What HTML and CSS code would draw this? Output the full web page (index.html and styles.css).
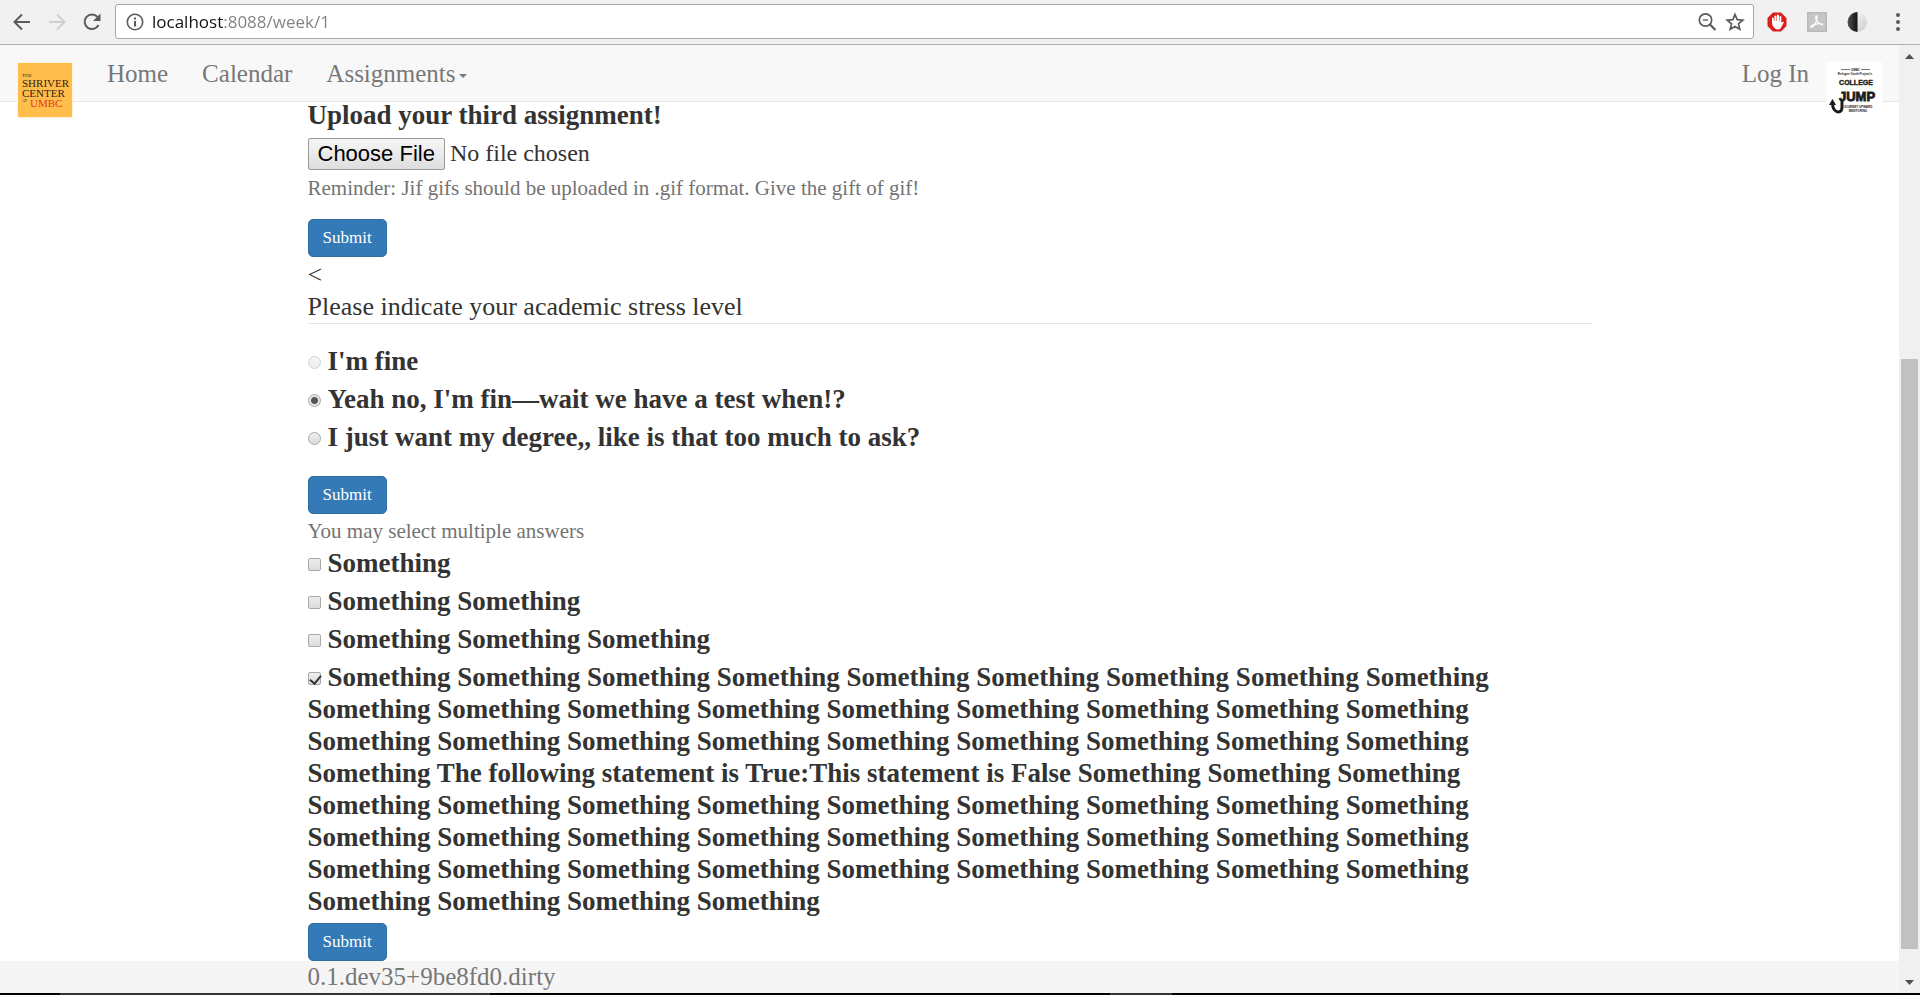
FILE: index.html
```html
<!DOCTYPE html>
<html lang="en">
<head>
<meta charset="utf-8">
<title>Week 1</title>
<link rel="stylesheet" href="styles.css">
</head>
<body>
<header class="toolbar">
  <button class="tool" aria-label="Back"><svg width="24" height="24" viewBox="0 0 24 24" fill="none" stroke="#5a5a5a" stroke-width="2"><path d="M20 12H5M12 4.500L4.500 12L12 19.500"/></svg></button>
  <button class="tool" aria-label="Forward" disabled><svg width="24" height="24" viewBox="0 0 24 24" fill="none" stroke="#d0d0d0" stroke-width="2"><path d="M4 12H19M12 4.500L19.500 12L12 19.500"/></svg></button>
  <button class="tool" aria-label="Reload"><svg width="24" height="24" viewBox="0 0 24 24" fill="none" stroke="#5a5a5a" stroke-width="2"><path d="M18.500 15A7.300 7.300 0 1 1 17.500 7"/><path d="M20.500 3.500V11H13Z" fill="#5a5a5a" stroke="none"/></svg></button>
  <div class="address">
    <svg width="18" height="18" viewBox="0 0 18 18" fill="none" stroke="#5a5a5a" stroke-width="2"><circle cx="9" cy="9" r="7.700" stroke-width="1.600"/><path d="M9 8V13.500M9 4.500V6.500"/></svg>
    <input class="url" type="text" value="localhost:8088/week/1" aria-label="Address">
    <button class="tool" aria-label="Zoom"><svg width="20" height="20" viewBox="0 0 20 20" fill="none" stroke="#5a5a5a" stroke-width="1.700"><circle cx="8.500" cy="8" r="6.200"/><path d="M13 12.500L18.500 18" stroke-width="2.200"/><path d="M5.800 8H11.200" stroke-width="1.300"/></svg></button>
    <button class="tool" aria-label="Bookmark"><svg width="20" height="20" viewBox="0 0 20 20" fill="none" stroke="#5a5a5a" stroke-width="1.700"><path d="M10 2.500L12.200 7.700L17.800 8.200L13.500 11.900L14.800 17.300L10 14.400L5.200 17.300L6.500 11.900L2.200 8.200L7.800 7.700Z"/></svg></button>
  </div>
  <div class="extensions">
    <button class="tool" aria-label="Ad blocker"><svg width="20" height="20" viewBox="0 0 20 20"><path d="M6 .5H14L19.500 6V14L14 19.500H6L.5 14V6Z" fill="#dc1d1d"/><path d="M5 11V6Q5.800 5 6.800 6V9H7.400V4Q8.400 2.800 9.400 4V9H9.900V3Q11 1.800 12 3V9.500H12.500V4.500Q13.500 3.500 14.300 4.500V11Q16 9 17 10Q15 14 13.500 16.500Q11 18.500 8 16.500Q5 14 5 11Z" fill="#fff"/></svg></button>
    <button class="tool" aria-label="PDF"><svg width="20" height="20" viewBox="0 0 20 20"><path d="M0 0H20V20H0Z" fill="#b9b9b9"/><path d="M1.500 1.500H18.500V18.500H1.500Z" fill="#c6c6c6"/><path d="M9 4C11 3 10 8 9 10C7.500 13 5 16 4 15C3.500 13 11 11 15.500 12C17 13 12 13 9.500 8.500C8.500 6.500 8.500 5 9 4Z" fill="none" stroke="#fff" stroke-width="1.200"/></svg></button>
    <button class="tool" aria-label="Contrast"><svg width="20" height="20" viewBox="0 0 20 20"><defs><linearGradient id="lit" x1="0" y1="0" x2="1" y2="1"><stop offset="0" stop-color="#fff"/><stop offset="1" stop-color="#ccc"/></linearGradient><linearGradient id="dark" x1="0" y1="0" x2="1" y2="0"><stop offset="0" stop-color="#555"/><stop offset="1" stop-color="#111"/></linearGradient></defs><circle cx="10" cy="10" r="10" fill="url(#lit)"/><path d="M10.500 0A10 10 0 0 0 10.500 20Z" fill="url(#dark)"/></svg></button>
    <button class="tool menu" aria-label="Menu"><svg width="6" height="20" viewBox="0 0 6 20" fill="#5a5a5a"><circle cx="3" cy="3" r="2"/><circle cx="3" cy="10" r="2"/><circle cx="3" cy="17" r="2"/></svg></button>
  </div>
</header>
<div class="window">
  <div class="page">
    <nav class="navbar">
      <a class="brand" href="#"><svg width="56" height="56" viewBox="0 0 56 56" role="img" aria-label="The Shriver Center at UMBC"><path d="M0 0H56V56H0Z" fill="#fff3dc"/><path d="M1 1H55V55H1Z" fill="#ffbe4c"/><g font-family="Liberation Serif, serif" fill="#35230c"><text x="5" y="15" font-size="5">THE</text><text x="5" y="25" font-size="11">SHRIVER</text><text x="5" y="35" font-size="11">CENTER</text><text x="5" y="40" font-size="4">AT</text><text x="13" y="45" font-size="11" fill="#e43820">UMBC</text></g></svg></a>
      <a class="link" href="#">Home</a>
      <a class="link" href="#">Calendar</a>
      <a class="link" href="#">Assignments<span class="caret"></span></a>
      <a class="link login" href="#">Log In</a>
      <a class="brand" href="#"><svg width="56" height="56" viewBox="0 0 56 56" role="img" aria-label="College Jump"><path d="M0 0H56V56H0Z" fill="#fff"/><path d="M15 7.500H24M35 7.500H44" stroke="#777"/><g font-family="Liberation Sans, sans-serif" font-weight="700" fill="#1c1c1c" text-anchor="middle"><text x="29.500" y="9" font-size="3">UMBC</text><text x="29" y="13" font-size="3">Refugee Youth Project's</text><text x="30" y="23" font-size="7" stroke="#1c1c1c" stroke-width=".4">COLLEGE</text><text x="31" y="39" font-size="13" stroke="#1c1c1c" stroke-width=".8">JUMP</text><text x="32" y="46" font-size="3">JOURNEY UPWARD</text><text x="32" y="50" font-size="3">MENTORING</text></g><path d="M16 38V45Q16 50 12 50Q7 49 6.500 42" fill="none" stroke="#1c1c1c" stroke-width="3"/><path d="M3 43L6.500 37L10 43Z" fill="#1c1c1c"/></svg></a>
    </nav>
    <main class="content">
      <form class="upload">
        <label class="question" for="file">Upload your third assignment!</label>
        <input class="file" type="file" id="file">
        <p class="help">Reminder: Jif gifs should be uploaded in .gif format. Give the gift of gif!</p>
        <button class="submit" type="button">Submit</button>
      </form>
      <p class="stray">&lt;</p>
      <form class="stress">
        <fieldset>
          <legend>Please indicate your academic stress level</legend>
          <label class="choice"><input type="radio" name="stress" disabled>I'm fine</label>
          <label class="choice"><input type="radio" name="stress" checked>Yeah no, I'm fin—wait we have a test when!?</label>
          <label class="choice"><input type="radio" name="stress">I just want my degree,, like is that too much to ask?</label>
        </fieldset>
        <button class="submit" type="button">Submit</button>
      </form>
      <form class="multiple">
        <p class="help">You may select multiple answers</p>
        <label class="choice"><input type="checkbox">Something</label>
        <label class="choice"><input type="checkbox">Something Something</label>
        <label class="choice"><input type="checkbox">Something Something Something</label>
        <label class="choice"><input type="checkbox" checked>Something Something Something Something Something Something Something Something Something Something Something Something Something Something Something Something Something Something Something Something Something Something Something Something Something Something Something Something The following statement is True:This statement is False Something Something Something Something Something Something Something Something Something Something Something Something Something Something Something Something Something Something Something Something Something Something Something Something Something Something Something Something Something Something Something Something Something Something</label>
        <button class="submit" type="button">Submit</button>
      </form>
    </main>
    <footer class="footer">0.1.dev35+9be8fd0.dirty</footer>
  </div>
  <div class="scrollbar" aria-hidden="true">
    <svg width="9" height="5" viewBox="0 0 9 5"><path d="M0 5L4.500 0L9 5Z" fill="#505050"/></svg>
    <div class="track"><div class="thumb"></div></div>
    <svg width="9" height="5" viewBox="0 0 9 5"><path d="M0 0L4.500 5L9 0Z" fill="#505050"/></svg>
  </div>
</div>
<div class="taskbar"></div>
</body>
</html>
```
FILE: styles.css
```css
* { box-sizing: border-box; }
body {
  margin: 0;
  height: 100vh;
  display: flex;
  flex-direction: column;
  overflow: hidden;
  background: #fff;
  color: #333;
  font: 26px/32px Georgia, "Liberation Serif", serif;
}
p { margin: 0; }
svg { display: block; }
.toolbar {
  flex: none;
  display: flex;
  align-items: center;
  gap: 11px;
  height: 45px;
  padding: 0 19px 1px 10px;
  background: #f1f1f1;
  border-bottom: 1px solid #b0b0b0;
}
.tool {
  display: block;
  flex: none;
  padding: 0;
  border: 0;
  background: none;
}
.address {
  flex: 1;
  display: flex;
  align-items: center;
  gap: 8px;
  height: 35px;
  padding: 0 8px 0 10px;
  background: #fff;
  border: 1px solid #a6a6a6;
  border-radius: 3px;
}
.url {
  flex: 1;
  padding: 0;
  border: 0;
  outline: 0;
  font: 17px/24px "Open Sans", sans-serif;
  color: transparent;
  background: linear-gradient(90deg, #111 71px, #808080 71px);
  background-clip: text;
  -webkit-background-clip: text;
}
.extensions {
  display: flex;
  align-items: center;
  gap: 20px;
  padding-left: 2px;
}
.menu { padding-left: 8px; }
.window {
  flex: 1;
  min-height: 0;
  display: flex;
}
.page {
  flex: 1;
  min-width: 0;
  display: flex;
  flex-direction: column;
}
.navbar {
  flex: none;
  display: flex;
  align-items: flex-start;
  height: 57px;
  padding: 0 17px;
  background: #f8f8f8;
  border-bottom: 1px solid #e7e7e7;
}
.brand { padding-top: 17px; }
.link {
  padding: 13px 0;
  margin-left: 34px;
  color: #777;
  font-size: 25px;
  text-decoration: none;
}
.caret {
  display: inline-block;
  margin-left: 3px;
  vertical-align: middle;
  border: 4px solid transparent;
  border-top-color: #777;
  border-bottom: 0;
}
.login {
  margin-left: auto;
  margin-right: 17px;
}
.content {
  width: 1284px;
  max-width: 100%;
  margin: 0 auto;
}
form {
  display: flex;
  flex-direction: column;
  align-items: flex-start;
}
.question {
  font-size: 27px;
  font-weight: 700;
  line-height: 26px;
}
.file {
  margin-top: 9px;
  font: inherit;
  font-size: 24px;
}
.file::file-selector-button {
  height: 32px;
  margin-right: 5px;
  padding: 0 9px;
  font: 22px/28px "Liberation Sans", Arial, sans-serif;
  color: #000;
  background: linear-gradient(#f6f6f6, #dedede);
  border: 1px solid #999;
  border-radius: 2px;
}
.help {
  color: #737373;
  font-size: 21px;
}
.upload .help { margin: 2px 0 15px; }
.multiple .help { margin-top: 1px; }
.submit {
  height: 38px;
  padding: 0 14px;
  color: #fff;
  background: #337ab7;
  border: 1px solid #2e6da4;
  border-radius: 5px;
  font: 17px/24px Georgia, "Liberation Serif", serif;
}
.stray { padding-top: 2px; }
fieldset {
  width: 100%;
  margin: 0 0 17px;
  padding: 0;
  border: 0;
}
legend {
  width: 100%;
  margin-bottom: 21px;
  padding: 0;
  border-bottom: 1px solid #e5e5e5;
}
.choice {
  display: block;
  margin-bottom: 6px;
  padding-right: 6px;
  font-size: 27px;
  font-weight: 700;
}
.choice input {
  appearance: none;
  display: inline-block;
  width: 13px;
  height: 13px;
  margin: 0 7px 0 0;
  vertical-align: 1px;
  border: 1px solid #a8a8a8;
  border-radius: 2px;
  background: linear-gradient(#ededed, #dcdcdc);
}
.choice input[type="radio"] { border-radius: 50%; }
.choice input[type="radio"]:checked { background: radial-gradient(circle, #555 3px, #e6e6e6 4px); }
.choice input:disabled { opacity: 0.5; }
.choice input:checked[type="checkbox"] {
  position: relative;
}
.choice input:checked[type="checkbox"]::after {
  content: "";
  position: absolute;
  left: 3px;
  top: 0;
  width: 5px;
  height: 9px;
  border: solid #333;
  border-width: 0 2px 2px 0;
  transform: rotate(40deg);
}
.footer {
  flex: 1;
  padding-left: calc((100% - 1284px) / 2);
  background: #f5f5f5;
  color: #777;
  font-size: 25px;
}
.scrollbar {
  flex: none;
  width: 21px;
  display: flex;
  flex-direction: column;
  align-items: center;
  gap: 10px;
  padding: 9px 2px 8px;
  background: #f0f0f0;
}
.track {
  flex: 1;
  width: 17px;
  display: flex;
  flex-direction: column;
  justify-content: flex-end;
  padding-bottom: 21px;
}
.thumb {
  height: 67%;
  background: #c1c1c1;
}
.taskbar {
  flex: none;
  height: 2px;
  background: linear-gradient(90deg, #000 60px, #333 60px 490px, #000 490px 1110px, #333 1110px 1172px, #000 1172px);
}
```
